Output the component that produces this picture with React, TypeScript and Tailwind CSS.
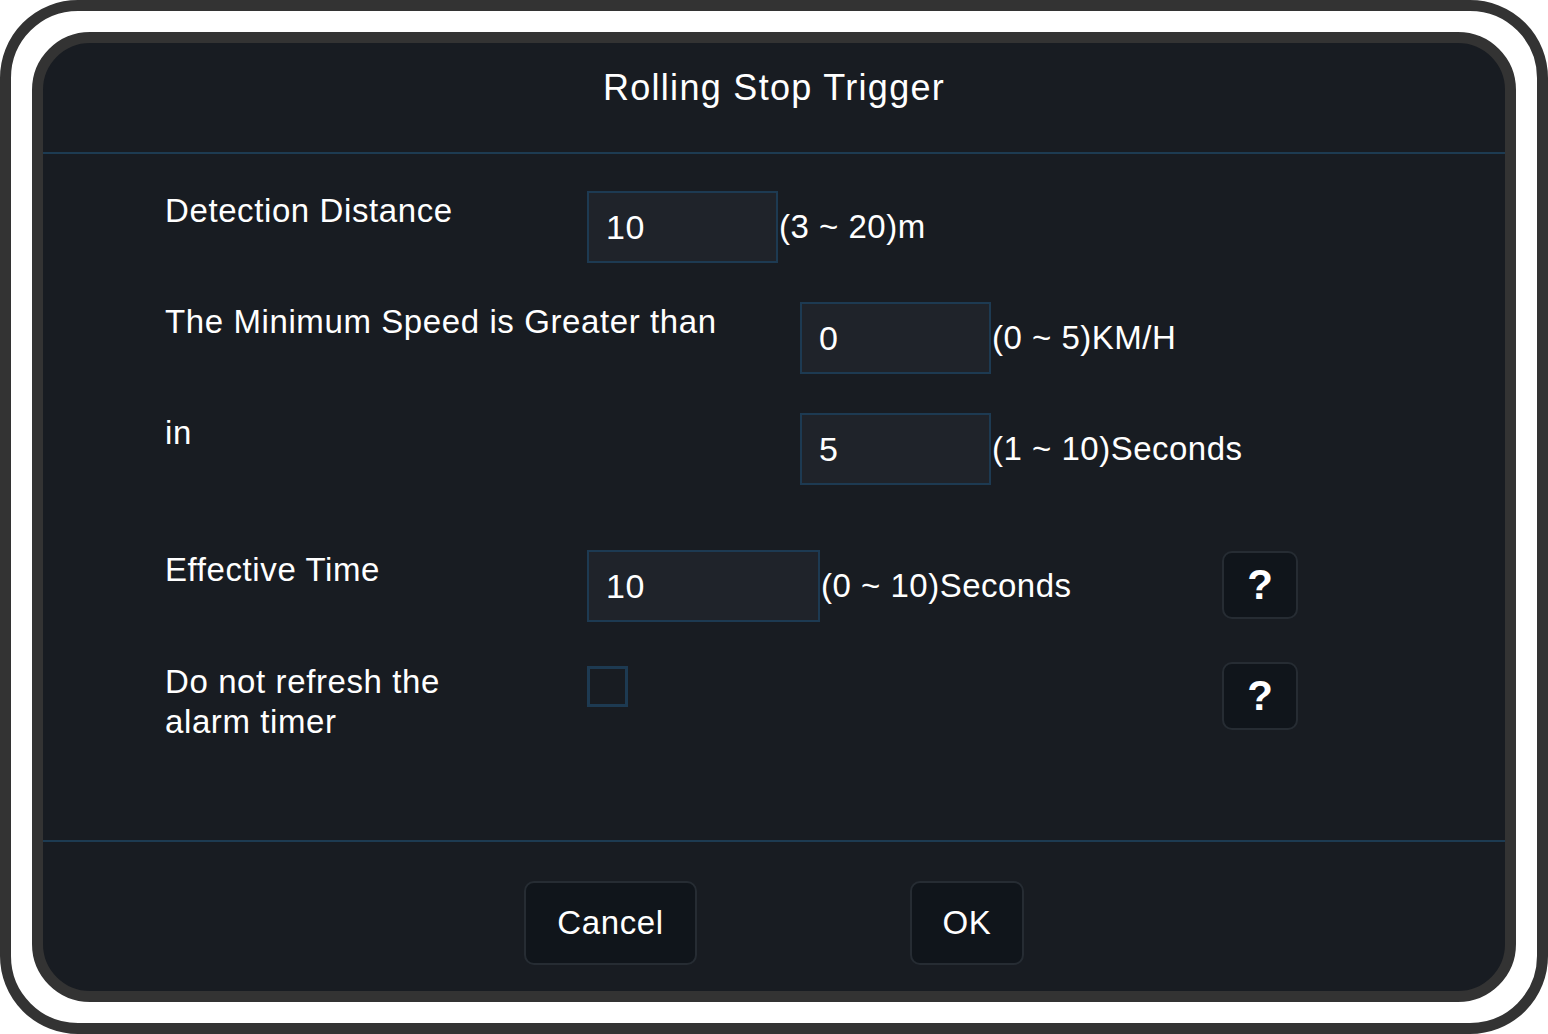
import React from "react";

const font = "font-['Liberation_Sans',Arial,sans-serif]";

const NumberBox = ({ value, width }: { value: string; width: string }) => (
  <input
    type="text"
    defaultValue={value}
    readOnly
    className={`${width} h-[72px] border-2 border-[#1d3a52] bg-[#1f232a] pl-[17px] text-[34px] tracking-[0.6px] text-white outline-none ${font}`}
  />
);

const HelpButton = ({ className = "" }: { className?: string }) => (
  <button
    className={`ml-auto flex h-[68px] w-[76px] items-center justify-center rounded-[10px] border-2 border-[#262c33] bg-[#10151b] text-[42px] font-bold leading-none text-white ${font} ${className}`}
  >
    ?
  </button>
);

const Row = ({
  label,
  labelWidth,
  className = "",
  children,
}: {
  label: React.ReactNode;
  labelWidth: string;
  className?: string;
  children: React.ReactNode;
}) => (
  <div className={`flex items-start pl-[122px] pr-[207px] ${className}`}>
    <div className={`${labelWidth} shrink-0 text-[33px] leading-[40px] tracking-[0.6px] text-white`}>
      {label}
    </div>
    {children}
  </div>
);

const Suffix = ({ children }: { children: React.ReactNode }) => (
  <span className="ml-[1px] text-[33px] leading-[40px] tracking-[0.5px] text-white">{children}</span>
);

export default function App() {
  return (
    <div className={`h-[1034px] w-[1548px] bg-white ${font}`}>
      <div className="h-full w-full rounded-[78px] border-[11px] border-[#333333] bg-white p-[21px]">
        <div className="flex h-full flex-col overflow-hidden rounded-[58px] border-[11px] border-[#333333] bg-[#181c22]">
          <div className="h-[111px] shrink-0 border-b-2 border-[#1d3b52] pt-[25px] text-center text-[36px] leading-[40px] tracking-[1.3px] text-white">
            Rolling Stop Trigger
          </div>

          <div className="flex h-[686px] shrink-0 flex-col">
            <Row label="Detection Distance" labelWidth="w-[422px]" className="mt-[37px]">
              <div className="flex items-center">
                <NumberBox value="10" width="w-[191px]" />
                <Suffix>(3 ~ 20)m</Suffix>
              </div>
            </Row>

            <Row label="The Minimum Speed is Greater than" labelWidth="w-[635px]" className="mt-[39px]">
              <div className="flex items-center">
                <NumberBox value="0" width="w-[191px]" />
                <Suffix>(0 ~ 5)KM/H</Suffix>
              </div>
            </Row>

            <Row label="in" labelWidth="w-[635px]" className="mt-[39px]">
              <div className="flex items-center">
                <NumberBox value="5" width="w-[191px]" />
                <Suffix>(1 ~ 10)Seconds</Suffix>
              </div>
            </Row>

            <Row label="Effective Time" labelWidth="w-[422px]" className="mt-[65px]">
              <div className="flex items-center">
                <NumberBox value="10" width="w-[233px]" />
                <Suffix>(0 ~ 10)Seconds</Suffix>
              </div>
              <HelpButton className="mt-[1px]" />
            </Row>

            <Row
              label={
                <>
                  Do not refresh the
                  <br />
                  alarm timer
                </>
              }
              labelWidth="w-[422px]"
              className="mt-[40px]"
            >
              <div className="mt-[4px] h-[41px] w-[41px] border-[3px] border-[#1d3a52]" />
              <HelpButton />
            </Row>
          </div>

          <div className="flex flex-1 justify-center gap-[213px] border-t-2 border-[#1d3b52] pt-[39px]">
            <button className="h-[84px] w-[173px] rounded-[10px] border-2 border-[#262c33] bg-[#10151b] text-[33px] tracking-[0.6px] text-white">
              Cancel
            </button>
            <button className="h-[84px] w-[114px] rounded-[10px] border-2 border-[#262c33] bg-[#10151b] text-[33px] tracking-[0.6px] text-white">
              OK
            </button>
          </div>
        </div>
      </div>
    </div>
  );
}
